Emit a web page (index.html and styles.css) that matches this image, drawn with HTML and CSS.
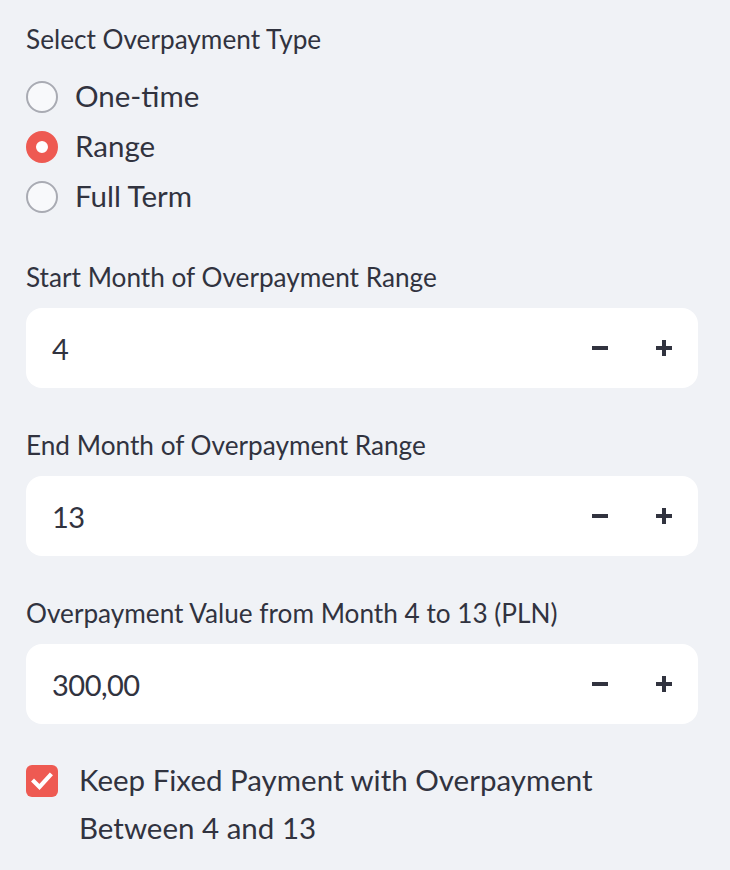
FILE: index.html
```html
<!DOCTYPE html>
<html>
<head>
<meta charset="utf-8">
<link rel="stylesheet" href="styles.css">
</head>
<body>
<div class="sidebar">
  <div class="label first">Select Overpayment Type</div>
  <div class="radios">
    <div class="radio"><span class="dot"></span><span class="rtext">One-time</span></div>
    <div class="radio"><span class="dot on"></span><span class="rtext">Range</span></div>
    <div class="radio"><span class="dot"></span><span class="rtext">Full Term</span></div>
  </div>

  <div class="label gap1">Start Month of Overpayment Range</div>
  <div class="num">
    <span class="val">4</span>
    <span class="btns">
      <svg class="ic" viewBox="0 0 16 16" width="16" height="16"><rect x="0" y="6" width="16" height="4" fill="#31333f"/></svg>
      <svg class="ic" viewBox="0 0 16 16" width="16" height="16"><rect x="0" y="6" width="16" height="4" fill="#31333f"/><rect x="6" y="0" width="4" height="16" fill="#31333f"/></svg>
    </span>
  </div>

  <div class="label gap2">End Month of Overpayment Range</div>
  <div class="num">
    <span class="val">13</span>
    <span class="btns">
      <svg class="ic" viewBox="0 0 16 16" width="16" height="16"><rect x="0" y="6" width="16" height="4" fill="#31333f"/></svg>
      <svg class="ic" viewBox="0 0 16 16" width="16" height="16"><rect x="0" y="6" width="16" height="4" fill="#31333f"/><rect x="6" y="0" width="4" height="16" fill="#31333f"/></svg>
    </span>
  </div>

  <div class="label gap2">Overpayment Value from Month 4 to 13 (PLN)</div>
  <div class="num">
    <span class="val">300,00</span>
    <span class="btns">
      <svg class="ic" viewBox="0 0 16 16" width="16" height="16"><rect x="0" y="6" width="16" height="4" fill="#31333f"/></svg>
      <svg class="ic" viewBox="0 0 16 16" width="16" height="16"><rect x="0" y="6" width="16" height="4" fill="#31333f"/><rect x="6" y="0" width="4" height="16" fill="#31333f"/></svg>
    </span>
  </div>

  <div class="check">
    <span class="box">
      <svg viewBox="0 0 32 32" width="32" height="32"><path d="M8 16.5 L13.5 22 L24 10.5" fill="none" stroke="#fff" stroke-width="4.2" stroke-linecap="square"/></svg>
    </span>
    <span class="ctext">Keep Fixed Payment with Overpayment Between 4 and 13</span>
  </div>
</div>
</body>
</html>
```
FILE: styles.css
```css
html, body {
  margin: 0;
  padding: 0;
  background: #f0f2f6;
}
body {
  font-family: Lato, "Open Sans", sans-serif;
  color: #31333f;
}
.sidebar {
  padding: 21px 32px 0 26px;
  display: flex;
  flex-direction: column;
}
.label {
  font-size: 26.2px;
  line-height: 36px;
  height: 36px;
  white-space: nowrap;
}
.gap1, .gap2 { line-height: 34px; }
.radios {
  display: flex;
  flex-direction: column;
  margin-top: 15px;
}
.radio {
  height: 50px;
  display: flex;
  align-items: center;
}
.dot {
  width: 32px;
  height: 32px;
  box-sizing: border-box;
  border-radius: 50%;
  border: 2px solid #a9abb3;
  background: #f8f9fb;
  flex: none;
}
.dot.on {
  border: 10px solid #ee5a52;
  background: #fff;
}
.rtext {
  font-size: 29.5px;
  line-height: 36px;
  margin-left: 17px;
  margin-top: -3px;
}
.gap1 { margin-top: 38px; }
.gap2 { margin-top: 40px; }
.num {
  margin-top: 12px;
  height: 80px;
  background: #fff;
  border-radius: 16px;
  display: flex;
  align-items: center;
  justify-content: space-between;
  padding: 0 26px 0 26px;
}
.val {
  font-size: 29px;
  letter-spacing: -0.5px;
}
.btns {
  display: flex;
  gap: 48px;
  align-items: center;
}
.ic { display: block; }
.check {
  margin-top: 33px;
  display: flex;
  align-items: flex-start;
}
.box {
  margin-top: 8px;
  width: 32px;
  height: 32px;
  border-radius: 6px;
  background: #ee5a52;
  flex: none;
}
.box svg { display: block; }
.ctext {
  font-size: 29.5px;
  line-height: 48px;
  margin-left: 21px;
  margin-top: -1px;
  width: 560px;
}
```
